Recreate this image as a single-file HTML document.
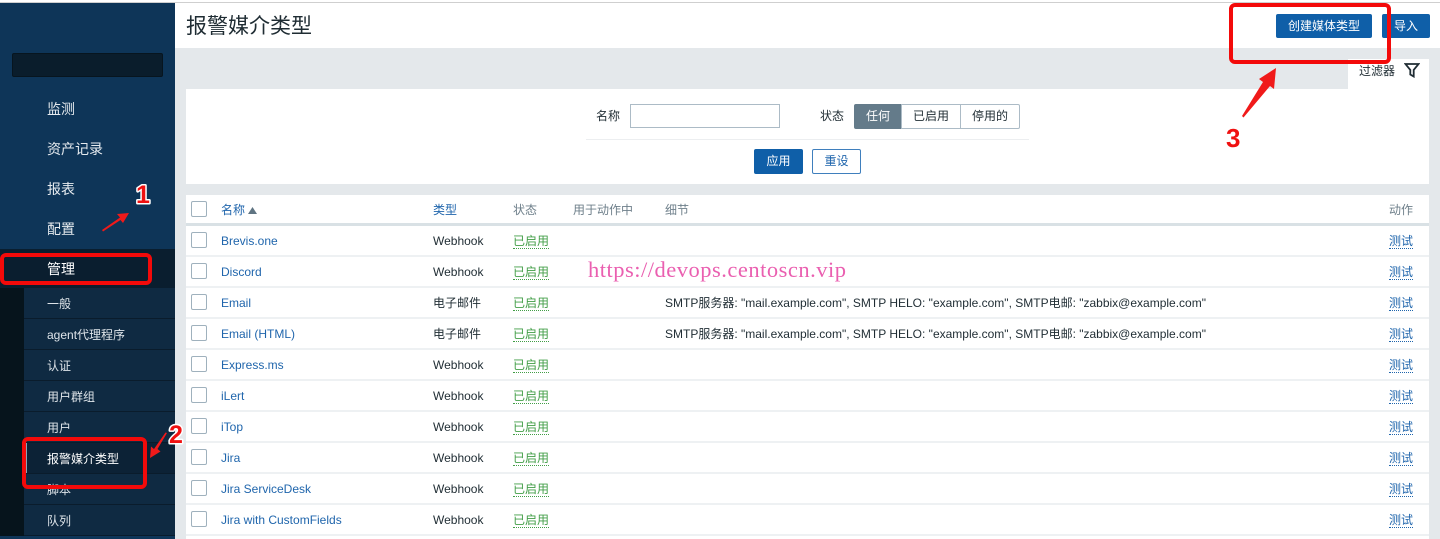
<!DOCTYPE html>
<html lang="zh"><head><meta charset="utf-8"><title>报警媒介类型</title>
<style>
*{box-sizing:border-box}
html,body{margin:0;padding:0;width:1440px;height:539px;overflow:hidden;background:#e4e8eb;font-family:"Liberation Sans","Noto Sans CJK SC",sans-serif;font-size:12px;color:#1f2c33}
#w{position:absolute;left:0;top:0;width:1440px;height:539px;overflow:hidden;filter:blur(.3px)}
.a{position:absolute;white-space:nowrap}
.nav{position:absolute;left:47px;color:#e6ebef;font-size:14px;line-height:20px;white-space:nowrap}
.sub{position:absolute;left:24px;width:151px;height:31px;border-bottom:1px solid #0a1c2c;background:#0f2a42;color:#dfe5ea;font-size:12px;line-height:32px;padding-left:23px;white-space:nowrap}
.row{position:absolute;left:186px;width:1243px;height:31px;background:#fff;border-bottom:2px solid #eef1f3}
.cb{position:absolute;left:5px;top:6px;width:16px;height:16px;border:1px solid #9fb1bd;border-radius:2px;background:#fff}
.t{position:absolute;top:0;line-height:30px;white-space:nowrap}
.l{color:#1f65ac}
.g{left:327px;top:8px;line-height:14px;color:#429e47;border-bottom:1px dotted #429e47;height:15px;position:absolute;white-space:nowrap}
.test{left:1203px;top:8px;line-height:14px;color:#1f65ac;border-bottom:1px dotted #1f65ac;height:15px;position:absolute;white-space:nowrap}
.btn{position:absolute;border-radius:2px;text-align:center;font-size:12px;white-space:nowrap}
.h{position:absolute;top:1px;line-height:29px;white-space:nowrap;color:#6e7f8a}
</style></head><body><div id="w">
<div class="a" style="left:0;top:0;width:1440px;height:3px;background:#fff"></div>
<div class="a" style="left:0;top:2px;width:1440px;height:1px;background:#cfcfcf"></div>
<!-- sidebar -->
<div class="a" style="left:0;top:3px;width:175px;height:536px;background:#0e3558"></div>
<div class="a" style="left:12px;top:53px;width:151px;height:24px;background:#0a1d2c;border:1px solid #07151f;border-radius:2px"></div>
<div class="nav" style="top:99px">监测</div>
<div class="nav" style="top:139px">资产记录</div>
<div class="nav" style="top:179px">报表</div>
<div class="nav" style="top:219px">配置</div>
<div class="a" style="left:0;top:249px;width:175px;height:39px;background:#0a1e2f"></div>
<div class="nav" style="top:259px;color:#fff">管理</div>
<div class="a" style="left:0;top:288px;width:24px;height:251px;background:#06141c"></div>
<div class="sub" style="top:288px">一般</div>
<div class="sub" style="top:319px">agent代理程序</div>
<div class="sub" style="top:350px">认证</div>
<div class="sub" style="top:381px">用户群组</div>
<div class="sub" style="top:412px">用户</div>
<div class="sub" style="top:443px;background:#0c2236;color:#fff">报警媒介类型</div>
<div class="a" style="left:26px;top:443px;width:1px;height:30px;background:#8fa3b3"></div>
<div class="sub" style="top:474px">脚本</div>
<div class="sub" style="top:505px">队列</div>
<div class="a" style="left:0;top:536px;width:175px;height:3px;background:#0e3558"></div>
<!-- header -->
<div class="a" style="left:175px;top:3px;width:1265px;height:45px;background:#fff"></div>
<div class="a" style="left:186px;top:13px;font-size:21px;line-height:28px;color:#1f2c33">报警媒介类型</div>
<div class="btn" style="left:1276px;top:14px;width:96px;height:24px;background:#0f5fa8;color:#fff;line-height:24px">创建媒体类型</div>
<div class="btn" style="left:1382px;top:14px;width:48px;height:24px;background:#0f5fa8;color:#fff;line-height:24px">导入</div>
<!-- filter -->
<div class="a" style="left:1348px;top:59px;width:81px;height:30px;background:#fff"></div>
<div class="a" style="left:1359px;top:63px;line-height:16px;color:#1f2c33">过滤器</div>
<svg class="a" style="left:1404px;top:62px" width="16" height="16" viewBox="0 0 16 16"><path d="M1.500 2H14.500L9.700 8V14.500L6.300 12.500V8Z" fill="none" stroke="#1f2c33" stroke-width="1.800"/></svg>
<div class="a" style="left:186px;top:89px;width:1243px;height:95px;background:#fff"></div>
<div class="a" style="left:596px;top:108px;line-height:16px">名称</div>
<div class="a" style="left:630px;top:104px;width:150px;height:24px;background:#fff;border:1px solid #acbbc6"></div>
<div class="a" style="left:820px;top:108px;line-height:16px">状态</div>
<div class="a" style="left:854px;top:104px;width:48px;height:25px;background:#647b8a;color:#fff;text-align:center;line-height:24px;border-radius:2px 0 0 2px">任何</div>
<div class="a" style="left:901px;top:104px;width:60px;height:25px;background:#fff;border:1px solid #acbbc6;text-align:center;line-height:23px">已启用</div>
<div class="a" style="left:960px;top:104px;width:60px;height:25px;background:#fff;border:1px solid #acbbc6;text-align:center;line-height:23px;border-radius:0 2px 2px 0">停用的</div>
<div class="a" style="left:586px;top:139px;width:443px;height:1px;background:#eceef0"></div>
<div class="btn" style="left:754px;top:149px;width:49px;height:25px;background:#0f5fa8;color:#fff;line-height:25px">应用</div>
<div class="btn" style="left:812px;top:149px;width:49px;height:25px;background:#fff;border:1px solid #3f7fbd;color:#1f65ac;line-height:23px">重设</div>
<!-- table head -->
<div class="a" style="left:186px;top:195px;width:1243px;height:31px;background:#fff;border-bottom:3px solid #d9e1e5">
<div class="cb" style="top:6px"></div>
<div class="h l" style="left:35px;color:#1f65ac">名称</div>
<svg class="a" style="left:62px;top:12px" width="9" height="7"><path d="M4.500 0L9 7H0Z" fill="#5f7482"/></svg>
<div class="h" style="left:247px;color:#1f65ac">类型</div>
<div class="h" style="left:327px">状态</div>
<div class="h" style="left:387px">用于动作中</div>
<div class="h" style="left:479px">细节</div>
<div class="h" style="left:1203px">动作</div>
</div>
<!-- rows -->
<div class="row" style="top:226px"><div class="cb"></div><div class="t l" style="left:35px">Brevis.one</div><div class="t" style="left:247px">Webhook</div><div class="g">已启用</div><div class="test">测试</div></div>
<div class="row" style="top:257px"><div class="cb"></div><div class="t l" style="left:35px">Discord</div><div class="t" style="left:247px">Webhook</div><div class="g">已启用</div><div class="test">测试</div></div>
<div class="row" style="top:288px"><div class="cb"></div><div class="t l" style="left:35px">Email</div><div class="t" style="left:247px">电子邮件</div><div class="g">已启用</div><div class="t" style="left:479px">SMTP服务器: "mail.example.com", SMTP HELO: "example.com", SMTP电邮: "zabbix@example.com"</div><div class="test">测试</div></div>
<div class="row" style="top:319px"><div class="cb"></div><div class="t l" style="left:35px">Email (HTML)</div><div class="t" style="left:247px">电子邮件</div><div class="g">已启用</div><div class="t" style="left:479px">SMTP服务器: "mail.example.com", SMTP HELO: "example.com", SMTP电邮: "zabbix@example.com"</div><div class="test">测试</div></div>
<div class="row" style="top:350px"><div class="cb"></div><div class="t l" style="left:35px">Express.ms</div><div class="t" style="left:247px">Webhook</div><div class="g">已启用</div><div class="test">测试</div></div>
<div class="row" style="top:381px"><div class="cb"></div><div class="t l" style="left:35px">iLert</div><div class="t" style="left:247px">Webhook</div><div class="g">已启用</div><div class="test">测试</div></div>
<div class="row" style="top:412px"><div class="cb"></div><div class="t l" style="left:35px">iTop</div><div class="t" style="left:247px">Webhook</div><div class="g">已启用</div><div class="test">测试</div></div>
<div class="row" style="top:443px"><div class="cb"></div><div class="t l" style="left:35px">Jira</div><div class="t" style="left:247px">Webhook</div><div class="g">已启用</div><div class="test">测试</div></div>
<div class="row" style="top:474px"><div class="cb"></div><div class="t l" style="left:35px">Jira ServiceDesk</div><div class="t" style="left:247px">Webhook</div><div class="g">已启用</div><div class="test">测试</div></div>
<div class="row" style="top:505px"><div class="cb"></div><div class="t l" style="left:35px">Jira with CustomFields</div><div class="t" style="left:247px">Webhook</div><div class="g">已启用</div><div class="test">测试</div></div>
<div class="a" style="left:186px;top:536px;width:1243px;height:3px;background:#fff"></div>
<!-- watermark -->
<div class="a" style="left:588px;top:256px;font-family:'Liberation Serif','DejaVu Serif',serif;font-size:22.5px;line-height:28px;color:#ea5fb0;letter-spacing:.5px">https://devops.centoscn.vip</div>
<!-- annotations -->
<svg class="a" style="left:0;top:0" width="1440" height="539" viewBox="0 0 1440 539">
<g fill="none" stroke="#f30a0a" stroke-width="4">
<rect x="2" y="255" width="148" height="28" rx="4"/>
<rect x="24" y="439" width="121" height="48" rx="4"/>
<rect x="1231" y="5" width="158" height="57" rx="4"/>
</g>
<path d="M102 230L120 217.500L117 214L129 213L123 223L120.500 220L103 231.500Z" fill="#f01a1a"/>
<path d="M167 433L157.500 449L160.500 451.500L150 458L151 446.500L154 449L165.500 432.500Z" fill="#f01a1a"/>
<path d="M1242 116L1263 82L1259 79L1276 68L1274 89L1270 86L1243.500 117.500Z" fill="#f01a1a"/>
<g font-family="'Liberation Sans',sans-serif" font-weight="700" fill="#f01010" stroke="#fff" stroke-width="3" paint-order="stroke" stroke-linejoin="round">
<text x="136" y="203" font-size="25">1</text>
<text x="169" y="443" font-size="25">2</text>
<text x="1226" y="147" font-size="26">3</text>
</g>
</svg>
</div></body></html>
